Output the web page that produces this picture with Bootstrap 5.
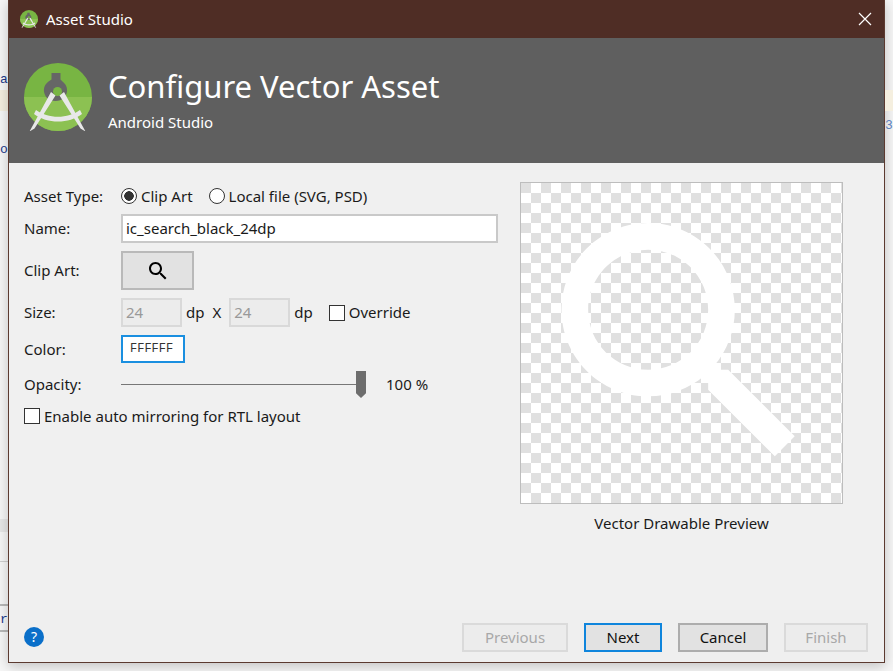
<!DOCTYPE html>
<html lang="en">

<head>
    <meta charset="UTF-8" />
    <title>Asset Studio</title>
    <meta name="viewport" content="width=device-width, initial-scale=1" />
    <link href="https://cdn.jsdelivr.net/npm/bootstrap@5.3.2/dist/css/bootstrap.min.css" rel="stylesheet" />
    <style>
        html, body {
            height: 671px;
            overflow: hidden;
        }

        body {
            background: #f6f6f6;
            font-family: "Noto Sans", "Open Sans", sans-serif;
            font-size: 15px;
            color: #1a1a1a;
        }

        .desk {
            height: 671px;
        }

        .side-left, .side-right {
            width: 8px;
            flex: none;
            overflow: hidden;
            font-family: "Liberation Mono", monospace;
            font-size: 13px;
            line-height: 14px;
            color: #1c3a8c;
        }

        .side-right {
            color: #5b82c0;
        }

        .bit { white-space: nowrap; }
        .band-yellow { height: 21px; background: #f5efdf; }
        .band-grey { height: 13px; background: #e7e7e7; }
        .line-grey { height: 1px; background: #cfcfcf; }
        .line-dark { height: 2px; background: #b8b8b8; }

        .dialog {
            width: 877px;
            height: 663px;
            flex: none;
            background: #f0f0f0;
            border: 1px solid #5c3a30;
            border-top: 0;
            box-shadow: 0 3px 12px rgba(0, 0, 0, 0.22);
        }

        .title-bar {
            height: 38px;
            background: #4f2d25;
            color: #fff;
            padding: 0 12px 0 11px;
            font-size: 15px;
        }

        .hero {
            height: 125px;
            background: #5f5f5f;
            color: #fff;
            padding-left: 15px;
        }

        .hero-title {
            font-size: 31px;
            line-height: 40px;
            margin-top: -3px;
        }

        .hero-sub {
            font-size: 15px;
            line-height: 20px;
            margin-top: 6px;
        }

        .content {
            height: 447px;
            padding: 19px 41px 0 15px;
        }

        .form-side {
            width: 474px;
        }

        .field-label {
            width: 97px;
            flex: none;
        }

        .line-row {
            line-height: 20px;
        }

        .win-input {
            background: #fff;
            border: 2px solid #c9c9c9;
            height: 29px;
            padding: 0 3px;
            line-height: 24px;
            color: #1a1a1a;
        }

        .art-btn {
            width: 73px;
            height: 39px;
            background: #e2e2e2;
            border: 2px solid #b9b9b9;
            border-radius: 0;
            padding: 0;
        }

        .num-input {
            width: 61px;
            background: #ececec;
            color: #999;
            border-color: #d9d9d9;
        }

        .colour-input {
            width: 64px;
            height: 28px;
            border-color: #1a8fe0;
            font-family: "Liberation Mono", monospace;
            font-size: 12px;
            line-height: 24px;
            padding-left: 7px;
            color: #333;
        }

        .win-radio {
            width: 16px;
            height: 16px;
            border: 1px solid #333;
            border-radius: 50%;
            background: #fff;
            flex: none;
        }

        .win-radio.on {
            background: radial-gradient(circle, #333 0 4.5px, #fff 5px);
        }

        .win-check {
            width: 16px;
            height: 16px;
            border: 1px solid #333;
            background: #fff;
            flex: none;
        }

        .slider-track {
            width: 249px;
            height: 27px;
        }

        .slider-line {
            height: 1px;
            background: #777;
            flex: 1;
        }

        .slider-thumb {
            width: 10px;
            height: 27px;
            background: #6d6d6d;
            clip-path: polygon(0 0, 100% 0, 100% 82%, 50% 100%, 0 82%);
            margin-right: 4px;
            margin-left: -5px;
        }

        .preview-side {
            width: 323px;
        }

        .preview-box {
            width: 323px;
            height: 322px;
            border: 1px solid #bdbdbd;
            background-color: #fff;
            background-image:
                linear-gradient(45deg, #e0e0e0 25%, transparent 25%, transparent 75%, #e0e0e0 75%),
                linear-gradient(45deg, #e0e0e0 25%, transparent 25%, transparent 75%, #e0e0e0 75%);
            background-size: 20px 20px;
            background-position: 10px 0, 0 10px;
        }

        .preview-box svg {
            display: block;
        }

        .dialog-foot {
            height: 52px;
            background: #efefef;
            padding: 13px 16px 0 15px;
        }

        .help-btn {
            width: 20px;
            height: 20px;
            background: #0a6fc9;
            color: #fff;
            border-radius: 50%;
            font-size: 14px;
            line-height: 20px;
            margin-top: 4px;
        }

        .win-btn {
            height: 29px;
            padding: 0;
            border-radius: 0;
            font-size: 15px;
            line-height: 23px;
            background: #e2e2e2;
            border: 2px solid #adadad;
            color: #111;
        }

        .win-btn:disabled {
            background: #ececec;
            border: 2px solid #dadada;
            color: #a8a8a8;
            opacity: 1;
        }

        .win-btn.focused {
            border-color: #0f85dc;
        }
    </style>
</head>

<body>
    <svg width="0" height="0" class="position-absolute">
        <defs>
            <symbol id="studioLogo" viewBox="0 0 68 68">
                <circle cx="34" cy="34" r="34" fill="#78b543" />
                <path d="M0 34a34 34 0 0 0 68 0z" fill="#8cc152" />
                <path d="M34 10h5v6.500l2 2c3 2.500 5 5.500 4.500 10 -.5 5 -4.500 9.500 -11.500 9.500s-11 -4.500 -11.500 -9.500c-.5 -4.500 1.500 -7.500 4.500 -10l3 -2v-6.500z" fill="#666" transform="translate(-2.500 0)" />
                <circle cx="33.500" cy="28.500" r="4.500" fill="#78b543" />
                <path d="M27 36l4.500 3.500 -21 33 -5 3z M40 36l-4.500 3.500 21 33 5 3z" fill="#e8e8e8" transform="translate(0 -7)" />
                <path d="M12 47c12 9 32 9 44 0l2 4c-13 10 -35 10 -48 0z" fill="#e8e8e8" />
            </symbol>
            <symbol id="searchGlyph" viewBox="0 0 24 24">
                <path d="M15.500 14h-.79l-.28-.27C15.410 12.590 16 11.110 16 9.500 16 5.910 13.090 3 9.500 3S3 5.910 3 9.500 5.910 16 9.500 16c1.610 0 3.090-.59 4.230-1.570l.27.28v.79l5 4.990L20.490 19l-4.990-5zm-6 0C7.010 14 5 11.990 5 9.500S7.010 5 9.500 5 14 7.010 14 9.500 11.990 14 9.500 14z" />
            </symbol>
        </defs>
    </svg>

    <div class="desk d-flex">
        <div class="side-left">
            <div class="bit" style="margin-top: 73px">a</div>
            <div class="band-yellow" style="margin-top: 3px"></div>
            <div class="bit" style="margin-top: 32px">o:</div>
            <div class="band-grey" style="margin-top: 362px"></div>
            <div class="line-grey" style="margin-top: 29px"></div>
            <div class="line-dark" style="margin-top: 42px"></div>
            <div class="bit" style="margin-top: 7px">r</div>
            <div class="line-dark" style="margin-top: 3px"></div>
        </div>

        <div class="dialog d-flex flex-column">
            <div class="title-bar d-flex align-items-center">
                <svg width="18" height="18" class="me-2 flex-none"><use href="#studioLogo" /></svg>
                <span class="flex-grow-1">Asset Studio</span>
                <svg width="14" height="14" viewBox="0 0 14 14" stroke="#fff" stroke-width="1.200" fill="none">
                    <path d="M1 1l12 12M13 1L1 13" />
                </svg>
            </div>

            <div class="hero d-flex align-items-center">
                <svg width="68" height="76" class="me-3" viewBox="0 0 68 76"><use href="#studioLogo" width="68" height="68" /></svg>
                <div>
                    <div class="hero-title">Configure Vector Asset</div>
                    <div class="hero-sub">Android Studio</div>
                </div>
            </div>

            <div class="content d-flex justify-content-between">
                <div class="form-side">
                    <div class="d-flex align-items-center line-row mb-2 mt-1">
                        <div class="field-label">Asset Type:</div>
                        <span class="win-radio on me-1"></span>
                        <span class="me-3">Clip Art</span>
                        <span class="win-radio me-1"></span>
                        <span>Local file (SVG, PSD)</span>
                    </div>
                    <div class="d-flex align-items-center mb-2">
                        <div class="field-label">Name:</div>
                        <div class="win-input flex-grow-1 ms-0">ic_search_black_24dp</div>
                    </div>
                    <div class="d-flex align-items-center mb-2">
                        <div class="field-label">Clip Art:</div>
                        <button class="btn art-btn d-flex align-items-center justify-content-center" type="button">
                            <svg width="24" height="24"><use href="#searchGlyph" /></svg>
                        </button>
                    </div>
                    <div class="d-flex align-items-center mb-2">
                        <div class="field-label">Size:</div>
                        <div class="win-input num-input">24</div>
                        <span class="ms-1">dp</span>
                        <span class="mx-2">X</span>
                        <div class="win-input num-input">24</div>
                        <span class="ms-1 me-3">dp</span>
                        <span class="win-check me-1"></span>
                        <span>Override</span>
                    </div>
                    <div class="d-flex align-items-center mb-2">
                        <div class="field-label">Color:</div>
                        <div class="win-input colour-input">FFFFFF</div>
                    </div>
                    <div class="d-flex align-items-center">
                        <div class="field-label">Opacity:</div>
                        <div class="slider-track d-flex align-items-center">
                            <div class="slider-line"></div>
                            <div class="slider-thumb"></div>
                        </div>
                        <span class="ms-3">100 %</span>
                    </div>
                    <div class="d-flex align-items-center line-row mt-2">
                        <span class="win-check me-1"></span>
                        <span>Enable auto mirroring for RTL layout</span>
                    </div>
                </div>

                <div class="preview-side text-center">
                    <div class="preview-box">
                        <svg width="321" height="320" viewBox="0 0 24 24" fill="#fff"><use href="#searchGlyph" /></svg>
                    </div>
                    <div class="mt-2">Vector Drawable Preview</div>
                </div>
            </div>

            <div class="dialog-foot d-flex">
                <div class="help-btn text-center">?</div>
                <div class="ms-auto d-flex">
                    <button class="btn win-btn" style="width: 106px" type="button" disabled>Previous</button>
                    <button class="btn win-btn focused ms-3" style="width: 78px" type="button">Next</button>
                    <button class="btn win-btn ms-3" style="width: 90px" type="button">Cancel</button>
                    <button class="btn win-btn ms-3" style="width: 84px" type="button" disabled>Finish</button>
                </div>
            </div>
        </div>

        <div class="side-right">
            <div class="band-yellow" style="margin-top: 90px"></div>
            <div class="bit" style="margin-top: 8px">3</div>
        </div>
    </div>
</body>

</html>
